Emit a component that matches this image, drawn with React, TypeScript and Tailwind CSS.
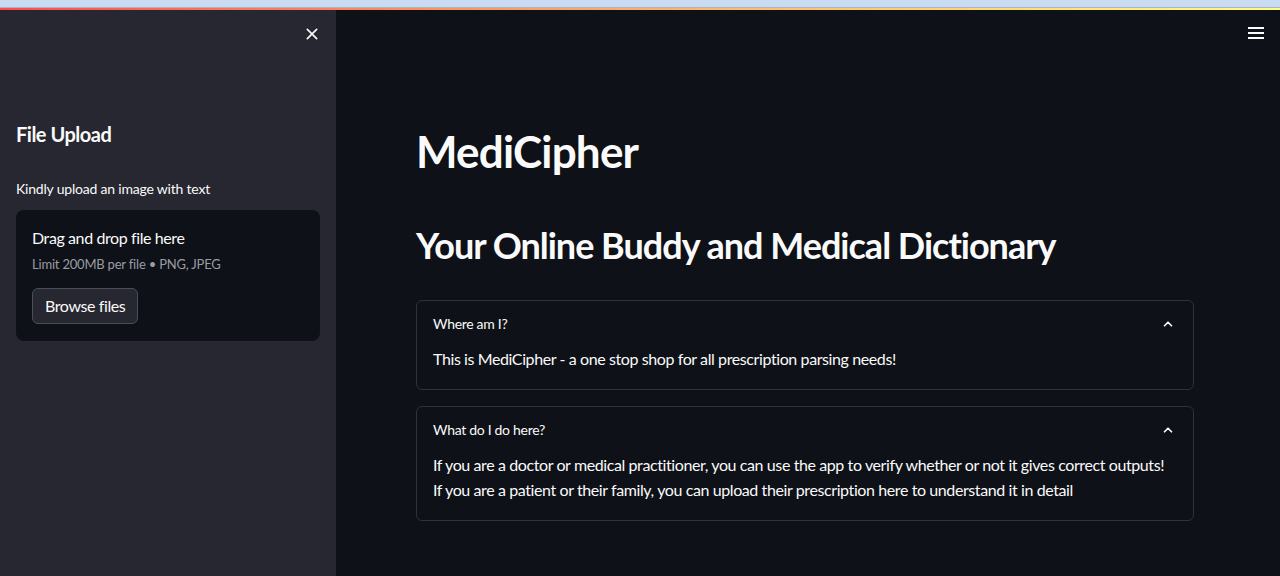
import React from "react";

const font = { fontFamily: "Lato, 'Liberation Sans', sans-serif" };

function Chevron() {
  return (
    <svg width="14" height="14" viewBox="0 0 24 24" fill="none" stroke="#fafafa" strokeWidth="3" strokeLinecap="round" strokeLinejoin="round">
      <path d="M6 15l6-6 6 6" />
    </svg>
  );
}

function Expander({ title, children }: { title: string; children: React.ReactNode }) {
  return (
    <div className="rounded-md border border-[#2f323b] bg-[#0e1117]">
      <div className="flex items-center justify-between px-4 h-[45px]">
        <span className="text-[14px] text-[#fafafa] tracking-[-0.3px]">{title}</span>
        <span className="mr-[2px]"><Chevron /></span>
      </div>
      <div className="px-4 pb-[18px] text-[16px] text-[#fafafa] leading-[25px] tracking-[-0.4px]">{children}</div>
    </div>
  );
}

export default function App() {
  return (
    <div className="w-[1280px] h-[576px] overflow-hidden flex flex-col bg-[#0e1117]" style={font}>
      <div className="h-[7px] bg-[#c9dcf4]" />
      <div className="h-[1px] bg-[#a9b4c4]" />
      <div className="h-[2px] bg-gradient-to-r from-[#ff4b4b] to-[#fffd80]" />
      <div className="flex flex-1 min-h-0">
        <aside className="w-[336px] shrink-0 bg-[#262730] flex flex-col px-4">
          <div className="flex justify-end pt-[16px]">
            <svg width="16" height="16" viewBox="0 0 24 24" fill="none" stroke="#fafafa" strokeWidth="2.5" strokeLinecap="round">
              <path d="M5 5l14 14M19 5L5 19" />
            </svg>
          </div>
          <h2 className="mt-[78px] text-[20px] font-bold text-[#fafafa] leading-[28px] tracking-[-0.5px]">File Upload</h2>
          <p className="mt-[31px] text-[14px] text-[#fafafa] leading-[20px] tracking-[-0.2px]">Kindly upload an image with text</p>
          <div className="mt-[11px] rounded-lg bg-[#0e1117] px-4 pt-[17px] pb-[17px] flex flex-col">
            <span className="text-[16px] text-[#fafafa] leading-[22px] tracking-[-0.4px]">Drag and drop file here</span>
            <span className="mt-[6px] text-[13px] text-[#9a9ca3] leading-[18px] tracking-[-0.2px]">Limit 200MB per file • PNG, JPEG</span>
            <button className="mt-[15px] self-start h-[36px] px-3 rounded-[6px] border border-[#4b4d57] bg-[#262730] text-[16px] text-[#fafafa] tracking-[-0.4px]">Browse files</button>
          </div>
        </aside>
        <main className="flex-1 flex flex-col relative">
          <div className="absolute right-[16px] top-[16px]">
            <svg width="16" height="14" viewBox="0 0 16 14" fill="#fafafa">
              <rect x="0" y="1" width="16" height="2" />
              <rect x="0" y="6" width="16" height="2" />
              <rect x="0" y="11" width="16" height="2" />
            </svg>
          </div>
          <div className="pl-[80px] pr-[86px] flex flex-col">
            <h1 className="mt-[112px] text-[44px] font-bold text-[#fafafa] leading-[58px] tracking-[-0.8px]">MediCipher</h1>
            <h2 className="mt-[42px] text-[36px] font-bold text-[#fafafa] leading-[46px] tracking-[-1px]">Your Online Buddy and Medical Dictionary</h2>
            <div className="mt-[32px] flex flex-col gap-[16px]">
              <Expander title="Where am I?">
                <p>This is MediCipher - a one stop shop for all prescription parsing needs!</p>
              </Expander>
              <Expander title="What do I do here?">
                <p>If you are a doctor or medical practitioner, you can use the app to verify whether or not it gives correct outputs!</p>
                <p>If you are a patient or their family, you can upload their prescription here to understand it in detail</p>
              </Expander>
            </div>
          </div>
        </main>
      </div>
    </div>
  );
}
